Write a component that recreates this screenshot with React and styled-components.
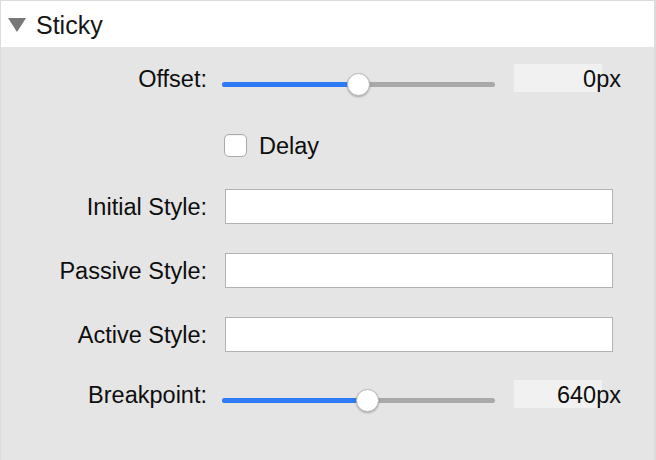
import styled, { createGlobalStyle } from "styled-components";

const GlobalStyle = createGlobalStyle`
  html, body {
    margin: 0;
    padding: 0;
    background: #e5e5e5;
  }
  * {
    box-sizing: border-box;
  }
`;

function Slider({ value, min, max }) {
  const pct = ((value - min) / (max - min)) * 100;
  return (
    <SliderWrap>
      <Track>
        <Fill style={{ width: pct + "%" }} />
        <Thumb style={{ left: pct + "%" }} />
      </Track>
    </SliderWrap>
  );
}

function App() {
  return (
    <>
      <GlobalStyle />
      <Panel>
        <Header>
          <svg width="18" height="14" viewBox="0 0 18 14">
            <polygon points="0,0 18,0 9,14" fill="#777777" />
          </svg>
          <Title>Sticky</Title>
        </Header>
        <Body>
          <Row $height={28} $top={17}>
            <Label>Offset:</Label>
            <Slider value={0} min={-100} max={100} />
            <Value>0px</Value>
          </Row>
          <Row $height={23} $top={42}>
            <Label />
            <Check $offset={17} />
            <CheckText>Delay</CheckText>
          </Row>
          <Row $height={35} $top={32}>
            <Label>Initial Style:</Label>
            <TextInput />
          </Row>
          <Row $height={35} $top={29}>
            <Label>Passive Style:</Label>
            <TextInput />
          </Row>
          <Row $height={35} $top={29}>
            <Label>Active Style:</Label>
            <TextInput />
          </Row>
          <Row $height={28} $top={28}>
            <Label>Breakpoint:</Label>
            <Slider value={640} min={0} max={1200} />
            <Value>640px</Value>
          </Row>
        </Body>
      </Panel>
    </>
  );
}

const Panel = styled.div`
  height: 460px;
  border-top: 1px solid #dcdcdc;
  border-left: 1px solid #dcdcdc;
  border-right: 2px solid #dcdcdc;
  background: #e5e5e5;
  font-family: "Liberation Sans", Arial, sans-serif;
  color: #0e0e0e;
`;

const Header = styled.div`
  height: 46px;
  background: #ffffff;
  display: flex;
  align-items: center;
  padding-left: 7px;
  gap: 10px;
  svg {
    margin-top: 2px;
  }
`;

const Title = styled.span`
  font-size: 25px;
  padding-top: 2px;
  color: #161616;
`;

const Body = styled.div`
  display: flex;
  flex-direction: column;
`;

const Row = styled.div`
  display: flex;
  align-items: center;
  height: ${(p) => p.$height}px;
  margin-top: ${(p) => p.$top}px;
`;

const Label = styled.div`
  width: 206px;
  flex: none;
  text-align: right;
  font-size: 23.5px;
  padding-top: 2px;
  white-space: nowrap;
`;

const SliderWrap = styled.div`
  align-self: stretch;
  width: 273px;
  margin-left: 15px;
  position: relative;
`;

const Track = styled.div`
  position: absolute;
  left: 0;
  right: 0;
  top: 18px;
  height: 5px;
  border-radius: 3px;
  background: #a9a9a9;
`;

const Fill = styled.div`
  height: 100%;
  border-radius: 3px;
  background: #2f7bf5;
`;

const Thumb = styled.div`
  position: absolute;
  top: 50%;
  width: 23px;
  height: 23px;
  margin-left: -11.5px;
  margin-top: -11.5px;
  border-radius: 50%;
  background: #ffffff;
  border: 1px solid #b8b8b8;
  box-shadow: 0 1px 2px rgba(0, 0, 0, 0.25);
`;

const Value = styled.div`
  align-self: stretch;
  width: 107px;
  margin-left: 19px;
  background: linear-gradient(to right, #f1f1f1 88px, transparent 88px);
  text-align: right;
  font-size: 23.5px;
  line-height: 28px;
  padding-top: 1px;
`;

const Check = styled.div`
  width: 23px;
  height: 23px;
  margin-left: ${(p) => p.$offset}px;
  border-radius: 5px;
  border: 1px solid #a9a9a9;
  background: #ffffff;
  box-shadow: inset 0 1px 1px rgba(0, 0, 0, 0.05);
`;

const CheckText = styled.span`
  margin-left: 12px;
  font-size: 23.5px;
  padding-top: 2px;
`;

const TextInput = styled.input`
  width: 388px;
  height: 35px;
  margin-left: 18px;
  border: 1px solid #b2b2b2;
  background: #ffffff;
  outline: none;
  font-family: inherit;
  font-size: 18px;
`;

export default App;
